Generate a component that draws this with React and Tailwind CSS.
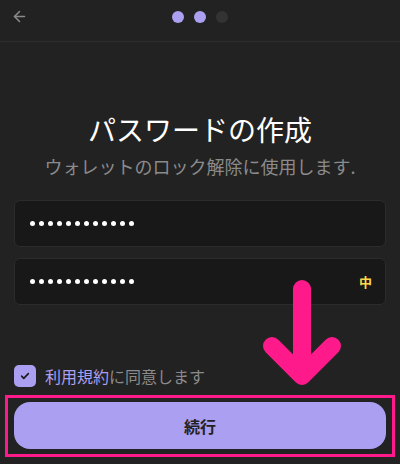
import React from "react";

const font = { fontFamily: '"Noto Sans CJK JP", "Noto Sans", sans-serif' };

function Dots() {
  return (
    <div className="flex items-center gap-[4px]">
      {Array.from({ length: 12 }).map((_, i) => (
        <span key={i} className="block w-[5px] h-[5px] rounded-full bg-white" />
      ))}
    </div>
  );
}

function PasswordField({ ime }) {
  return (
    <div className="flex items-center justify-between h-[47px] rounded-[6px] bg-[#181818] border border-[#2c2c2c] pl-[15px] pr-[13px]">
      <Dots />
      {ime && (
        <span className="text-[13px] font-bold leading-none text-[#ffd84a]">中</span>
      )}
    </div>
  );
}

export default function App() {
  return (
    <div className="relative w-[400px] h-[464px] overflow-hidden bg-[#222222]" style={font}>
      {/* Header */}
      <header className="relative flex items-center justify-center h-[42px] border-b border-[#2e2e2e]">
        <button className="absolute left-[11px] top-[8px] text-[#8a8a8a]">
          <svg width="17" height="17" viewBox="0 0 24 24" fill="none" stroke="currentColor" strokeWidth="2.2" strokeLinecap="round" strokeLinejoin="round">
            <path d="M19 12H5" />
            <path d="M12 19l-7-7 7-7" />
          </svg>
        </button>
        <div className="flex items-center gap-[10px] -mt-[8px]">
          <span className="w-[12px] h-[12px] rounded-full bg-[#ab9ff2]" />
          <span className="w-[12px] h-[12px] rounded-full bg-[#ab9ff2]" />
          <span className="w-[12px] h-[12px] rounded-full bg-[#333333]" />
        </div>
      </header>

      {/* Body */}
      <main className="flex flex-col px-[14px]">
        <h1 className="mt-[69px] text-center text-[28px] leading-[36px] text-white">
          パスワードの作成
        </h1>
        <p className="mt-[7px] text-center text-[18px] leading-[24px] text-[#8b8b8b]">
          ウォレットのロック解除に使用します.
        </p>

        <div className="mt-[22px] flex flex-col gap-[11px]">
          <PasswordField />
          <PasswordField ime />
        </div>

        <label className="mt-[60px] flex items-center gap-[9px] text-[16px] leading-[22px]">
          <span className="flex items-center justify-center w-[22px] h-[22px] rounded-[5px] bg-[#ab9ff2]">
            <svg width="10" height="10" viewBox="0 0 24 24" fill="none" stroke="#1c1c1c" strokeWidth="4" strokeLinecap="round" strokeLinejoin="round">
              <path d="M4 12.5l5 5L20 6.5" />
            </svg>
          </span>
          <span className="text-[#8b8b8b]">
            <span className="text-[#ab9ff2]">利用規約</span>に同意します
          </span>
        </label>

        <button className="mt-[15px] h-[47px] rounded-[16px] bg-[#ab9ff2] text-[16px] font-bold text-[#222222]">
          続行
        </button>
      </main>

      {/* Annotation overlay */}
      <div className="absolute left-[5px] top-[395px] w-[390px] h-[62px] border-[3px] border-[#ff1a8c] pointer-events-none" />
      <svg className="absolute left-0 top-0 pointer-events-none" width="400" height="464" viewBox="0 0 400 464">
        <g stroke="#ff1a8c" strokeWidth="18" strokeLinecap="round" strokeLinejoin="round" fill="none">
          <path d="M302 289V374" />
          <path d="M272 346L302 376L332 346" />
        </g>
      </svg>
    </div>
  );
}
